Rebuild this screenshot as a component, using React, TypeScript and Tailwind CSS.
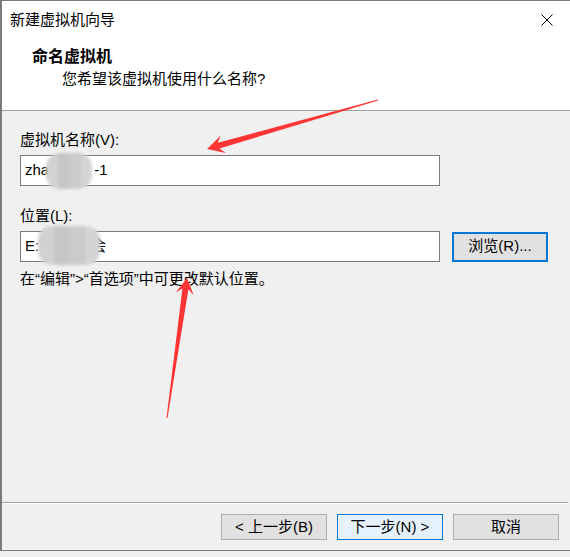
import React from "react";

// Blurred mosaic patch hiding private text
function Smudge({className}: {className: string}) {
    return (
        <div className={`absolute flex overflow-hidden rounded-[14px] blur-[1.5px] ${className}`}>
            <div className="flex-1 bg-[#d2d2d2]"/>
            <div className="flex-1 bg-[#c6c6c6]"/>
            <div className="flex-1 bg-[#cbcbcb]"/>
            <div className="flex-1 bg-[#d4d4d4]"/>
        </div>
    );
}

function WizardButton({children, primary}: {children: React.ReactNode; primary?: boolean}) {
    return (
        <button
            className={
                "flex h-[26px] w-[106px] items-center justify-center border text-[15px] text-black " +
                (primary ? "border-[#0078d7] bg-[#e5f1fb]" : "border-[#adadad] bg-[#e1e1e1]")
            }
        >
            {children}
        </button>
    );
}

export default function App() {
    return (
        <div
            className="relative h-[557px] w-[570px] overflow-hidden bg-[#f0f0f0] text-black"
            style={{fontFamily: '"Liberation Sans", "Noto Sans CJK SC", sans-serif'}}
        >
            <div className="flex h-[551px] flex-col border-b border-l-2 border-t border-[#7a7a7a]">
                {/* title bar + page header */}
                <div className="h-[110px] border-b border-[#a0a0a0] bg-white">
                    <div className="flex h-[37px] items-center justify-between pl-[8px] pr-[16px]">
                        <span className="text-[15px] leading-5">新建虚拟机向导</span>
                        <svg width="12" height="12" viewBox="0 0 12 12" className="mr-[1px]">
                            <path d="M0.5 0.5 L11.5 11.5 M11.5 0.5 L0.5 11.5" stroke="#000" strokeWidth="1"/>
                        </svg>
                    </div>
                    <div className="pl-[30px] pt-[9px]">
                        <div className="text-[16px] font-bold leading-5">命名虚拟机</div>
                        <div className="mt-[2px] pl-[30px] text-[15px] leading-5">您希望该虚拟机使用什么名称?</div>
                    </div>
                </div>

                {/* body */}
                <div className="flex-1 pl-[18px] pt-[19px]">
                    <div className="text-[15px] leading-5">虚拟机名称(V):</div>
                    <div className="relative mt-[5px] flex h-[31px] w-[420px] items-center border border-[#7a7a7a] bg-white pl-[4px] text-[15px]">
                        <span>zha</span>
                        <span className="inline-block w-[45px]"/>
                        <span>-1</span>
                        <Smudge className="left-[25px] top-[-3px] h-[36px] w-[46px]"/>
                    </div>

                    <div className="mt-[20px] text-[15px] leading-5">位置(L):</div>
                    <div className="mt-[5px] flex items-center gap-[12px]">
                        <div className="relative flex h-[31px] w-[420px] items-center border border-[#7a7a7a] bg-white pl-[4px] text-[15px]">
                            <span>E:\</span>
                            <span className="inline-block w-[48px]"/>
                            <span>会</span>
                            <Smudge className="left-[17px] top-[-6px] h-[39px] w-[62px]"/>
                        </div>
                        <button className="flex h-[30px] w-[96px] items-center justify-center border-2 border-[#0078d7] bg-[#e1e1e1] text-[15px]">
                            浏览(R)...
                        </button>
                    </div>

                    <div className="mt-[7px] text-[15px] leading-5">在“编辑”&gt;“首选项”中可更改默认位置。</div>
                </div>

                {/* footer */}
                <div className="mr-[2px] h-px bg-[#a0a0a0]"/>
                <div className="mr-[2px] h-px bg-white"/>
                <div className="flex h-[46px] items-center justify-end gap-[10px] pr-[11px]">
                    <WizardButton>&lt; 上一步(B)</WizardButton>
                    <WizardButton primary>下一步(N) &gt;</WizardButton>
                    <WizardButton>取消</WizardButton>
                </div>
            </div>

            {/* annotation arrows drawn over the dialog */}
            <svg className="pointer-events-none absolute left-0 top-0" width="570" height="557" viewBox="0 0 570 557">
                <polygon
                    fill="#ff3535"
                    points="377.9,99.5 217.7,142.8 220.8,135.6 207,149 225.8,152.9 219.4,148.6 378.1,100.5"
                />
                <polygon
                    fill="#ff3535"
                    points="166.5,418 182.4,288.5 175.8,292.5 187,278 193.6,295.1 188.4,289.3 167.5,418"
                />
            </svg>
        </div>
    );
}
